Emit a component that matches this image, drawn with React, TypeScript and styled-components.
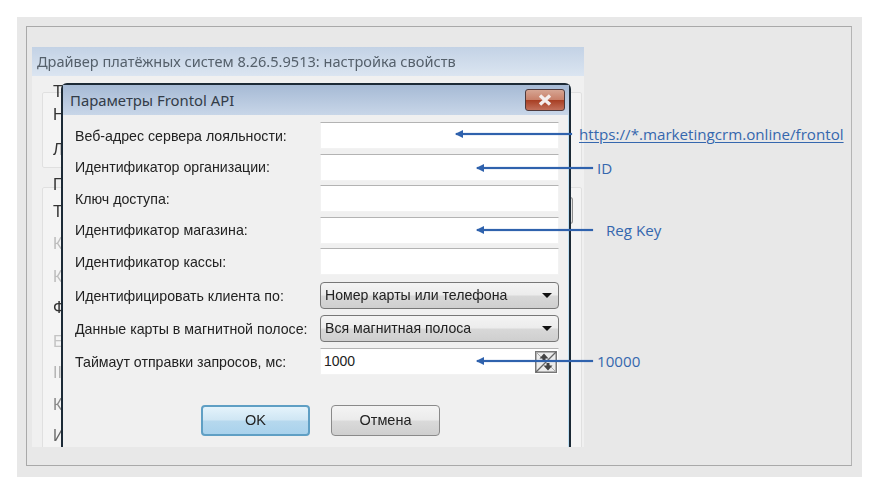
import React from "react";
import styled, { createGlobalStyle } from "styled-components";

const GlobalStyle = createGlobalStyle`
  html, body {
    margin: 0;
    padding: 0;
    background: #fff;
  }
`;

const Page = styled.div`
  box-sizing: border-box;
  width: 879px;
  height: 494px;
  padding: 17px;
  overflow: hidden;
`;

const Frame = styled.div`
  position: relative;
  box-sizing: border-box;
  width: 845px;
  height: 460px;
  padding: 9px 10px 11px 9px;
  background: #e8e8e8;
`;

const Inset = styled.div`
  box-sizing: border-box;
  height: 100%;
  padding: 20px 0 18px 5px;
  border: 1px solid #a9a9a9;
  border-right-color: #b4b4b4;
`;

const Win = styled.div`
  position: relative;
  display: flex;
  flex-direction: column;
  width: 552px;
  height: 100%;
  background: #f0f0f0;
`;

const WinTitle = styled.div`
  flex: none;
  height: 29px;
  padding-left: 5px;
  background: linear-gradient(#c3d2e5, #dbe5f1);
  color: #55606b;
  font: 14.57px/28px "Noto Sans", sans-serif;
  white-space: nowrap;
  filter: blur(0.3px);
`;

const WinBody = styled.div`
  flex: 1;
  display: flex;
  flex-direction: column;
  gap: 19px;
  padding: 16px 2px 0 10px;
  overflow: hidden;
`;

const Group = styled.div<{ $height: number }>`
  position: relative;
  flex: none;
  box-sizing: border-box;
  height: ${(p) => p.$height}px;
  padding: 0 0 0 10px;
  border: 1px solid #e0e0e0;
  border-radius: 2px;
  background: #f4f4f4;
  font: 16px/21px "Liberation Sans", sans-serif;
  filter: blur(0.3px);
`;

const GhostLine = styled.div<{ $gap: number; $color?: string }>`
  margin-top: ${(p) => p.$gap}px;
  color: ${(p) => p.$color ?? "#333"};
`;

const SideControl = styled.div`
  position: absolute;
  top: 9px;
  right: 8px;
  width: 2px;
  height: 25px;
  border: 1px solid #8d8d8d;
  border-left: 0;
  border-radius: 0 3px 3px 0;
  background: #e4e4e4;
`;

const Dialog = styled.div`
  position: absolute;
  top: 36px;
  left: 29px;
  bottom: 0;
  box-sizing: border-box;
  width: 510px;
  display: flex;
  flex-direction: column;
  border: 2px solid #1c2a36;
  border-bottom: 0;
  border-radius: 6px 6px 0 0;
  background: #f0f0f0;
  box-shadow: inset -1px 0 0 #bfdff3;
`;

const DialogTitle = styled.div`
  flex: none;
  display: flex;
  align-items: center;
  justify-content: space-between;
  height: 30px;
  padding: 0 4px 0 7px;
  background: linear-gradient(#a6bad5, #c8d6e8);
  color: #333c48;
  font: 14.86px/30px "Noto Sans", sans-serif;
`;

const CloseButton = styled.div`
  display: flex;
  align-items: center;
  justify-content: center;
  box-sizing: border-box;
  width: 40px;
  height: 22px;
  border: 1px solid #4e3a3c;
  border-radius: 3px;
  background: linear-gradient(#d6a593 0%, #c8806a 48%, #a83f24 52%, #c2715c 100%);
`;

const Form = styled.div<{ $rowGap: number }>`
  display: grid;
  grid-template-columns: 245px 239px;
  grid-auto-rows: 27px;
  row-gap: ${(p) => p.$rowGap}px;
  padding: 7px 0 0 12px;
  align-items: center;
`;

const Label = styled.div`
  color: #222;
  font: 14.2px/20px "Liberation Sans", sans-serif;
  white-space: nowrap;
  filter: blur(0.3px);
`;

const TextField = styled.div`
  position: relative;
  box-sizing: border-box;
  height: 27px;
  padding-left: 3px;
  border: 1px solid #f2f2f2;
  border-top: 1px solid #b3b3b3;
  background: #fff;
  color: #222;
  font: 14px/24px "Liberation Sans", sans-serif;
`;

const Select = styled.div`
  display: flex;
  align-items: center;
  justify-content: space-between;
  box-sizing: border-box;
  height: 27px;
  padding: 0 4px;
  border: 1px solid #777;
  border-radius: 4px;
  background: linear-gradient(#f4f4f4, #ececec 48%, #d8d8d8 52%, #cfcfcf);
  color: #222;
  font: 14.1px/25px "Liberation Sans", sans-serif;
  filter: blur(0.3px);
`;

const Caret = styled.span`
  width: 0;
  height: 0;
  margin-right: 2px;
  border-top: 5px solid #111;
  border-left: 5px solid transparent;
  border-right: 5px solid transparent;
`;

const SpinIcon = styled.svg`
  position: absolute;
  top: 2px;
  right: 1px;
`;

const Buttons = styled.div`
  display: flex;
  gap: 21px;
  margin: 30px 0 0 138px;
`;

const Button = styled.div<{ $primary?: boolean }>`
  box-sizing: border-box;
  width: 109px;
  height: 31px;
  border: ${(p) => (p.$primary ? "2px solid #5f9fc4" : "1px solid #8a8a8a")};
  border-radius: 4px;
  background: ${(p) =>
    p.$primary
      ? "linear-gradient(#e4f3fb, #cfe6f4 48%, #b6d8ee 52%, #a9d2ec)"
      : "linear-gradient(#f4f4f4, #ebebeb 48%, #dadada 52%, #cfcfcf)"};
  color: #222;
  font: 14.5px/${(p) => (p.$primary ? 27 : 29)}px "Liberation Sans", sans-serif;
  text-align: center;
  filter: blur(0.3px);
`;

const Callout = styled.div<{ $left: number; $top: number; $gap: number }>`
  position: absolute;
  left: ${(p) => p.$left}px;
  top: ${(p) => p.$top}px;
  display: flex;
  align-items: center;
  gap: ${(p) => p.$gap}px;
  height: 20px;
  color: #3567ae;
  font: 15.15px/20px "Open Sans", sans-serif;
  white-space: nowrap;
`;

const Arrow = styled.span<{ $length: number }>`
  position: relative;
  display: block;
  width: ${(p) => p.$length}px;
  height: 2px;
  background: #2f62ad;
  box-shadow: 0 0 1px #2f62ad;

  &::before {
    content: "";
    position: absolute;
    left: -1px;
    top: -3px;
    border-top: 4px solid transparent;
    border-bottom: 4px solid transparent;
    border-right: 8px solid #2f62ad;
  }
`;

const UrlText = styled.span`
  text-decoration: underline;
  text-underline-offset: 2px;
`;

const rows = [
  "Веб-адрес сервера лояльности:",
  "Идентификатор организации:",
  "Ключ доступа:",
  "Идентификатор магазина:",
  "Идентификатор кассы:",
];

const callouts = [
  { left: 439, top: 107, gap: 7, text: "https://*.marketingcrm.online/frontol", url: true },
  { left: 460, top: 141, gap: 4, text: "ID" },
  { left: 460, top: 203, gap: 13, text: "Reg Key" },
  { left: 460, top: 334, gap: 4, text: "10000" },
];

export default function App() {
  return (
    <Page>
      <GlobalStyle />
      <Frame>
        <Inset>
          <Win>
            <WinTitle>Драйвер платёжных систем 8.26.5.9513: настройка свойств</WinTitle>
            <WinBody>
              <Group $height={76}>
                <GhostLine $gap={-12}>Т</GhostLine>
                <GhostLine $gap={2}>Н</GhostLine>
                <GhostLine $gap={14}>Л</GhostLine>
              </Group>
              <Group $height={280}>
                <GhostLine $gap={-14}>П</GhostLine>
                <GhostLine $gap={6}>Т</GhostLine>
                <GhostLine $gap={11} $color="#bdbdbd">К</GhostLine>
                <GhostLine $gap={12} $color="#bdbdbd">К</GhostLine>
                <GhostLine $gap={10}>Ф</GhostLine>
                <GhostLine $gap={13} $color="#c4c4c4">Е</GhostLine>
                <GhostLine $gap={10} $color="#b4b4b4">II</GhostLine>
                <GhostLine $gap={11} $color="#8a8a8a">К</GhostLine>
                <GhostLine $gap={10} $color="#666">И</GhostLine>
                <SideControl />
              </Group>
            </WinBody>
            <Dialog>
              <DialogTitle>
                Параметры Frontol API
                <CloseButton>
                  <svg width="18" height="12" viewBox="0 0 18 12">
                    <path d="M4 1.5 L14 10.5 M14 1.5 L4 10.5" stroke="#f4eeee" strokeWidth="3.4" />
                  </svg>
                </CloseButton>
              </DialogTitle>
              <Form $rowGap={4.5}>
                {rows.map((label) => (
                  <React.Fragment key={label}>
                    <Label>{label}</Label>
                    <TextField />
                  </React.Fragment>
                ))}
              </Form>
              <Form $rowGap={6}>
                <Label>Идентифицировать клиента по:</Label>
                <Select>
                  Номер карты или телефона
                  <Caret />
                </Select>
                <Label>Данные карты в магнитной полосе:</Label>
                <Select>
                  Вся магнитная полоса
                  <Caret />
                </Select>
                <Label>Таймаут отправки запросов, мс:</Label>
                <TextField>
                  1000
                  <SpinIcon width="22" height="22" viewBox="0 0 22 22">
                    <rect x="0.75" y="0.75" width="20.5" height="20.5" fill="#ececec" stroke="#777" strokeWidth="1.5" />
                    <path d="M1 21 L21 1" stroke="#666" strokeWidth="1.3" />
                    <path d="M1 1 L21 21" stroke="#aaa" strokeWidth="1" />
                    <path d="M9 2.5 L13.5 7.5 H10.5 V10 H7.5 V7.5 H4.5 Z" fill="#444" />
                    <path d="M13 19.5 L8.5 14.5 H11.5 V12 H14.5 V14.5 H17.5 Z" fill="#444" />
                  </SpinIcon>
                </TextField>
              </Form>
              <Buttons>
                <Button $primary>OK</Button>
                <Button>Отмена</Button>
              </Buttons>
            </Dialog>
          </Win>
        </Inset>
        {callouts.map((c) => (
          <Callout key={c.text} $left={c.left} $top={c.top} $gap={c.gap}>
            <Arrow $length={116} />
            {c.url ? <UrlText>{c.text}</UrlText> : c.text}
          </Callout>
        ))}
      </Frame>
    </Page>
  );
}
